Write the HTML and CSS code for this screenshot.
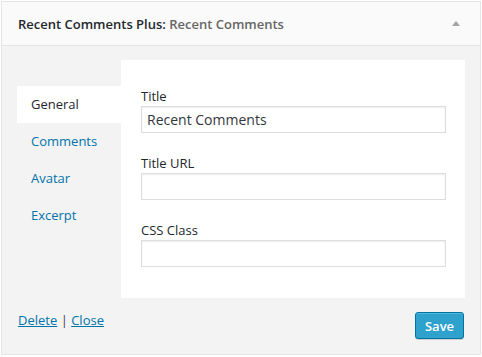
FILE: index.html
```html
<!DOCTYPE html>
<html lang="en">

<head>
  <meta charset="UTF-8" />
  <meta name="viewport" content="width=device-width, initial-scale=1.0" />
  <title>Recent Comments Plus</title>
  <link rel="stylesheet" href="styles.css">
</head>

<body>

  <div class="widget">
    <div class="widget-top">
      <h3>Recent Comments Plus: <span class="in-title">Recent Comments</span></h3>
      <span class="toggle"></span>
    </div>

    <div class="widget-inside">
      <div class="tabs-wrap">
        <ul class="tabs">
          <li class="active">General</li>
          <li><a href="#">Comments</a></li>
          <li><a href="#">Avatar</a></li>
          <li><a href="#">Excerpt</a></li>
        </ul>

        <div class="panel">
          <div class="field">
            <label>Title</label>
            <input type="text" value="Recent Comments">
          </div>
          <div class="field">
            <label>Title URL</label>
            <input type="text" value="">
          </div>
          <div class="field">
            <label>CSS Class</label>
            <input type="text" value="">
          </div>
        </div>
      </div>

      <div class="widget-control">
        <div class="links"><a href="#">Delete</a> | <a href="#">Close</a></div>
        <button class="save-btn">Save</button>
      </div>
    </div>
  </div>

</body>

</html>
```

FILE: styles.css
```css
body {
  margin: 0;
  padding: 1px 1px 0;
  background: #fff;
  font-family: 'Open Sans', sans-serif;
  font-size: 13px;
  color: #444;
}

.widget {
  border: 1px solid #e5e5e5;
  background: #f3f3f3;
}

.widget-top {
  display: flex;
  justify-content: space-between;
  align-items: center;
  height: 43px;
  padding: 0 20px 0 16px;
  background: #fafafa;
  border-bottom: 1px solid #e5e5e5;
}

.widget-top h3 {
  margin: 0;
  font-size: 13px;
  font-weight: 600;
  color: #23282d;
}

.in-title {
  color: #666;
}

.toggle {
  width: 0;
  height: 0;
  border-left: 4px solid transparent;
  border-right: 4px solid transparent;
  border-bottom: 5px solid #a0a5aa;
}

.widget-inside {
  padding: 14px 15px 15px;
}

.tabs-wrap {
  display: flex;
}

.tabs {
  list-style: none;
  margin: 26px 0 0;
  padding: 0;
  width: 104px;
}

.tabs li {
  height: 37px;
  line-height: 37px;
  padding-left: 14px;
  font-size: 13px;
}

.tabs li.active {
  background: #fff;
  color: #23282d;
}

.tabs a {
  color: #0073aa;
  text-decoration: none;
}

.panel {
  width: 305px;
  height: 211px;
  padding: 27px 19px 0 20px;
  background: #fff;
}

.field {
  margin-bottom: 21px;
}

.field label {
  display: block;
  line-height: 18px;
  height: 19px;
  color: #23282d;
}

.field input {
  display: block;
  box-sizing: border-box;
  width: 305px;
  height: 27px;
  margin: 0;
  padding: 0 5px;
  border: 1px solid #ddd;
  box-shadow: inset 0 1px 2px rgba(0, 0, 0, 0.07);
  font-family: 'Open Sans', sans-serif;
  font-size: 14px;
  color: #32373c;
  outline: none;
}

.widget-control {
  display: flex;
  justify-content: space-between;
  align-items: flex-start;
  padding-top: 14px;
}

.links {
  padding-left: 1px;
  color: #444;
  line-height: 16px;
}

.links a {
  color: #0073aa;
}

.save-btn {
  width: 49px;
  height: 27px;
  margin-right: 1px;
  padding: 0;
  background: #2ea2cc;
  border: 1px solid #0074a2;
  border-radius: 3px;
  box-shadow: inset 0 1px 0 rgba(120, 200, 230, 0.5), 0 1px 0 rgba(0, 0, 0, 0.15);
  color: #fff;
  font-family: 'Open Sans', sans-serif;
  font-size: 13px;
  font-weight: 600;
}
```
